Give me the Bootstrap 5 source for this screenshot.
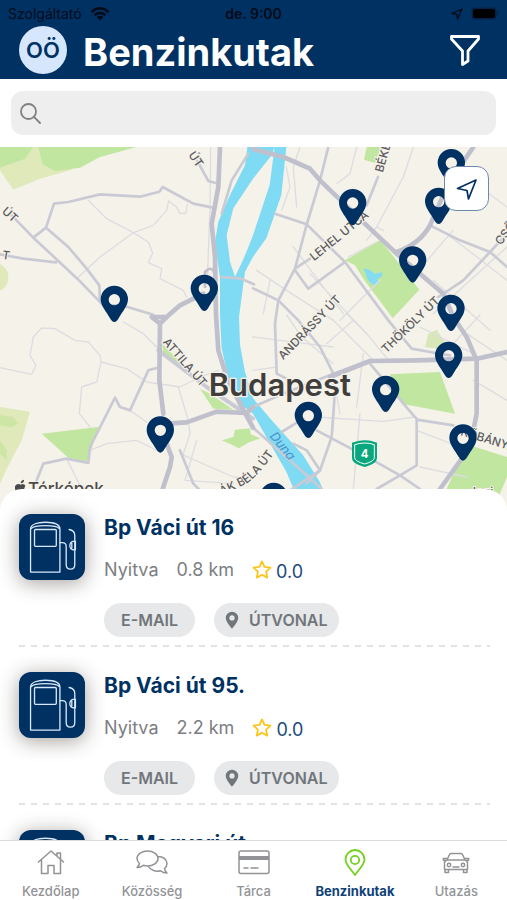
<!DOCTYPE html>
<html lang="hu">
<head>
<meta charset="utf-8">
<meta name="viewport" content="width=device-width, initial-scale=1">
<title>Benzinkutak</title>
<link rel="stylesheet" href="https://cdn.jsdelivr.net/npm/bootstrap@5.3.0/dist/css/bootstrap.min.css">
<style>
:root{--navy:#003163;--muted:#7b7e82}
body{font-family:Inter,"Liberation Sans",sans-serif;color:var(--navy)}
svg{display:block;flex:none}
main{min-height:0}
.top-bar{background:var(--navy)}
.status{height:25px;padding:2px 8px 0;font-size:14px;line-height:24px;color:#020b17}
.status > *{flex:1 1 0}
.title-row{height:54px;padding:0 26px 4px 19px;gap:16px}
.avatar{width:48px;height:48px;background:#d6e6fd;color:var(--navy);font-size:22px;font-weight:600}
.page-title{font-size:38px;line-height:48px;font-weight:700;padding-top:4px}
.search-row{padding:12px 11px}
.search-field{height:44px;border-radius:12px;background:#eee;padding:0 9px;color:#808080}
.search-field input{font-size:18px}
.search-field:focus-within{outline:2px solid #8fb2dc}
.locate{top:19px;right:18px;width:45px;height:45px;border:1px solid #6d89ab;border-radius:12px}
.sheet{margin-top:-28px;border-radius:22px 22px 0 0;overflow:auto;scrollbar-width:none;min-height:0;padding:0 17px 0 19px}
.sheet::-webkit-scrollbar{display:none}
.station{padding:25px 0 10px;gap:19px;background:repeating-linear-gradient(90deg,#e3e3e3 0 6px,transparent 6px 12px) left bottom/100% 2px no-repeat}
.thumb{width:66px;height:66px;border-radius:12px;background:var(--navy);box-shadow:0 3px 20px rgba(40,30,25,.42)}
.station h2{font-size:21px;line-height:28px;font-weight:700;margin:0 0 14px}
.meta{font-size:18px;line-height:28px;height:28px;color:var(--muted);gap:18px;margin-bottom:19px}
.rating{color:#204a7d;gap:4px}
.rating span{padding-top:4px}
.actions{gap:19px}
.pill{height:34px;border:0;border-radius:17px;background:#e6e8ea;color:#71767b;font-size:16px;font-weight:600;padding:0 17px}
.pill-route{padding:0 11px;gap:10px}
.tabs{border-top:1px solid #dcdcdc;height:60px}
.tabs a{flex:1 1 0;color:#929397;font-size:13px;line-height:18px;font-weight:500;padding-top:7px;gap:6px}
.tabs a.current{color:#104177;font-weight:700}
.line{fill:none;stroke:currentColor;stroke-linecap:round;stroke-linejoin:round}
.road{fill:none;stroke:#c9cad4;stroke-linejoin:round;stroke-linecap:round}
.road.lane{stroke:#dddde1}
.road.avenue{stroke:#bfc0cc}
.street{font-size:35px;font-weight:500;fill:#5c5b5d;stroke:#f5f2ea;stroke-width:6px;paint-order:stroke}
</style>
<script src="https://cdn.jsdelivr.net/npm/bootstrap@5.3.0/dist/js/bootstrap.bundle.min.js"></script>
</head>
<body>
<svg width="0" height="0" class="position-absolute" aria-hidden="true">
<defs>
<symbol id="pump" viewBox="0 0 200 200"><g fill="none" stroke="#d9e8fa" stroke-width="4" stroke-linejoin="round" stroke-linecap="round"><path d="M35 176V46C35 31 57 25 80 25S124 31 124 46V176Z"/><path d="M37 44Q44 35 80 35T122 44"/><rect x="47" y="47" width="66" height="51" rx="3"/><path d="M124 87h7q12 0 12 12v54q0 14 13 14t13-14V65q0-15-17-18M169 82q-14 0-15 13t15 14M171 82v26M160 88v15"/></g></symbol>
<symbol id="star" viewBox="0 0 20 20"><path fill="none" stroke="#fcc419" stroke-width="1.800" stroke-linejoin="round" d="M10 1.500l2.500 5.400 6 .7-4.400 4 1.100 6L10 14.800l-5.200 2.800 1.100-6-4.400-4 6-.7z"/></symbol>
<symbol id="spot" viewBox="0 0 14 18"><path fill="currentColor" fill-rule="evenodd" d="M7 17.800C6 16 .8 11 .8 7a6.200 6.200 0 0 1 12.400 0c0 4-5.200 9-6.200 10.800zM7 4.300a2.600 2.600 0 1 0 0 5.200 2.600 2.600 0 0 0 0-5.200z"/></symbol>
<symbol id="pin" viewBox="-42 -110 84 112" overflow="visible"><path fill="#003163" fill-rule="evenodd" d="M0 0C-5 0-9-5-12-10C-25-32-41-49-41-68A41 41 0 0 1 41-68C41-49 25-32 12-10C9-5 5 0 0 0ZM0-84a17 17 0 1 0 0 34 17 17 0 0 0 0-34Z"/></symbol>
</defs>
</svg>

<div class="vh-100 d-flex flex-column overflow-hidden bg-white">
<header class="top-bar flex-shrink-0">
  <div class="status d-flex">
    <div class="d-flex align-items-center gap-2"><span>Szolgáltató</span>
      <svg width="20" height="14" viewBox="0 0 20 14" aria-hidden="true"><g fill="none" stroke="#020b17" stroke-width="2.600"><path d="M1.500 5Q10-2.500 18.500 5M4.500 8.300Q10 3.500 15.500 8.300"/></g><path fill="#020b17" d="M6.700 10.200Q10 7.500 13.300 10.200L10 13.500z"/></svg></div>
    <div class="text-center fw-semibold">de. 9:00</div>
    <div class="d-flex align-items-center justify-content-end gap-2">
      <svg width="12" height="12" viewBox="0 0 12 12" aria-hidden="true"><path class="line" stroke-width="1.300" d="M11 1L1 5.500l4.700.8L6.500 11z"/></svg>
      <svg width="28" height="13" viewBox="0 0 28 13" aria-hidden="true"><rect x=".5" y=".5" width="25" height="12" rx="3" fill="#022347"/><rect x="2" y="2" width="22" height="9" rx="2"/><path fill="#022347" d="M26 4q3 2.500 0 5z"/></svg></div>
  </div>
  <div class="title-row d-flex align-items-center">
    <div class="avatar rounded-circle d-flex align-items-center justify-content-center">OÖ</div>
    <h1 class="page-title text-white m-0 flex-grow-1">Benzinkutak</h1>
    <button class="btn p-0 border-0 text-white" aria-label="Szűrés"><svg width="32" height="32" viewBox="0 0 32 32" aria-hidden="true"><path class="line" stroke-width="2.800" d="M2.500 2.500H29.500V5L19 17V27L13.500 30.500V17L2.500 5Z"/></svg></button>
  </div>
</header>

<div class="search-row flex-shrink-0">
  <div class="search-field d-flex align-items-center gap-2">
    <label for="q"><svg width="21" height="21" viewBox="0 0 21 21" role="img" aria-label="Keresés"><path class="line" stroke-width="1.800" d="M13.700 13.700L20 20M16 8.500a7.500 7.500 0 1 1-15 0a7.500 7.500 0 1 1 15 0z"/></svg></label>
    <input id="q" type="search" class="form-control border-0 bg-transparent shadow-none p-0">
  </div>
</div>

<main class="d-flex flex-column flex-grow-1">
<section class="position-relative flex-shrink-0" aria-label="Térkép">
<svg class="w-100" viewBox="0 0 1521 1110" role="img" aria-label="Budapest térképe">
<rect width="1521" height="1110" fill="#f5f2ea"/>
<!-- parks and hills -->
<g fill="#dfe9b9">
<path d="M0 0H330L210 70 120 95 40 128 0 70Z"/><path d="M0 350q28 18 25 45t-25 35z"/><path d="M0 780L90 794 65 880 20 965 0 1010Z"/>
</g>
<g fill="#c1e6a0">
<path d="M0 0H100L75 35 0 62Z"/><path d="M115 0H410L300 30 240 62 165 72 128 52Z"/><path d="M0 805l40 5 15 20-20 10-35-5zM0 880l20 30 0 30-20-20z" fill="#cde5a5"/>
<path d="M125 860L295 840 262 945 205 932Z"/><path d="M487 590L560 665 490 622ZM600 725L630 740 700 788 640 785Z"/>
<path d="M665 880l35-10 5-22 45-4 2 18 30 12-35 12-30 18-25-12z"/>
<path d="M1100 0H1143L1125 48 1092 38Z"/>
<path d="M1035 340L1140 280 1178 325 1258 428 1178 514 1090 395 1065 355Z"/>
<path d="M1170 682L1320 675 1365 800 1205 770Z"/>
<path d="M1395 890L1521 930V990L1470 1110H1300L1352 1000Z"/><path d="M1275 600L1285 560 1310 548 1350 610Z" fill="#d7e7b8"/>
</g>
<path d="M1090 362l20 8 15 10 22-5-2 14-13 8 5 14-20 2-14-15z" fill="#84dcf3"/>
<!-- river and island -->
<path fill="#7fdaf3" d="M742 0L735 54 690 144 655 224 645 284 660 394 660 504 665 604 685 694 720 770 759 800 859 974 895 1060 910 1110H990L969 1029 959 1004 909 924 819 824 759 754 735 674 720 594 717 510 735 374 759 330 799 274 844 144 859 0Z"/>
<path fill="#f5f2ea" d="M815 25L759 95 700 184 680 264 690 344 705 389Q735 330 759 265L809 114 824 0Z"/>
<!-- lanes -->
<g class="road lane" stroke-width="4">
<path d="M265 160L320 215 400 257 445 285 458 318 445 347 485 365 480 395 550 430 560 450"/>
<path d="M230 395L300 330 400 257 460 235 500 190 506 162 530 180 540 200 558 198 562 172"/>
<path d="M0 662L95 682 108 655 90 625 100 570 125 543 165 545 225 580 265 585 300 625 303 645 290 705 245 720 238 800 270 840"/>
<path d="M303 645L380 665 440 705 540 720 600 690 655 670"/><path d="M370 525L430 560 480 610"/><path d="M390 790L440 825M270 910L320 890 410 880 480 915M200 935L245 1026"/>
<path d="M535 720L565 820 570 860 550 920M540 920L700 990 760 995"/>
<path d="M632 0L630 180 622 400M590 880L555 1000 700 1010"/>
<path d="M859 60L870 120 845 190M900 0L880 60 890 180M1070 0L1050 80 1010 110"/>
<path d="M1240 0L1210 90 1130 240 1150 250M1045 330L1130 285M1521 180L1440 120M1040 500L1100 560 1170 645M1130 240L1100 280"/>
<path d="M1359 250L1230 400M1340 260L1521 400M1300 400L1470 550M1521 300L1300 500M1400 560L1521 640M1440 504L1360 590"/>
<path d="M770 370L860 430 1000 520M880 300L1030 500M790 500L810 400M759 570L1000 600M930 380L1100 560M1020 520L1140 400"/>
<path d="M950 810L1150 823 1245 810M1260 960L1400 990M1070 780L1090 620M1250 850L1380 900M1000 690L1020 800M1420 700L1521 760M1260 540L1420 620"/>
<path d="M860 504L905 570 1000 650M1000 520L1120 640M830 660L759 670M1060 520L980 590M1080 800L1060 1026"/>
</g>
<!-- streets -->
<g class="road" stroke-width="8">
<path d="M35 205L100 272 235 398 310 475 365 475 460 503"/>
<path d="M100 272L138 242 162 170 205 165 300 142 420 149 478 134 488 120 580 170 635 181"/>
<path d="M138 242L205 300 260 365 298 415 300 460"/><path d="M0 322L70 335 168 346"/>
<path d="M592 42L625 102 655 110M745 20L695 100 665 200M665 390L720 394 762 412"/>
<path d="M110 1000L130 950 200 935 265 948 270 900 345 752 360 780 390 790 445 670 470 663"/>
<path d="M985 0L960 100 918 240 885 365 835 460 825 530 830 680 870 700"/>
<path d="M759 424L835 460 895 520 960 600 1000 680 1003 760 995 870 960 970 920 1010"/>
<path d="M825 200L920 232 1035 345 1165 520 1210 575 1235 605 1290 615 1350 625"/>
<path d="M885 370L925 425 1035 345M885 365L930 335"/>
<path d="M1100 175L1134 90M1290 235L1380 280 1470 315 1521 360M1470 315L1390 400 1315 450M1470 315L1521 260"/>
<path d="M1110 650L1240 805 1250 815 1250 955 1200 985 1130 1026M1250 818L1360 835M950 850L1120 940 1200 985 1260 1026M845 855L910 815"/>
<path d="M759 780L850 740 1000 680 1110 640M759 842L920 985 965 1026M880 890L920 910 960 970M870 1030L960 970M540 910L580 1010 600 1030"/>
<path d="M475 610L620 720 759 815" stroke-width="12"/>
</g>
<!-- main roads -->
<g class="road avenue" stroke-width="14">
<path d="M660 0L655 120 635 230 645 330 648 504 655 610 680 690 720 770 759 842"/>
<path d="M610 440L540 475 500 510 480 530 455 510 500 510M480 530L478 700 490 800"/>
<path d="M500 830L560 826 650 794 740 798 759 780M500 890L515 930 510 960 488 1026"/>
<path d="M615 420V375Q640 350 645 390" stroke-width="8"/>
<path d="M759 6L850 30 930 65 960 100 1100 235 1190 320 1330 440 1360 510 1400 570 1430 640 1430 800 1410 900 1320 1026"/>
<path d="M1190 315Q1260 290 1290 235L1345 110 1420 0"/>
<path d="M990 690L1110 642 1250 640 1430 635 1521 615"/>
</g>
<!-- highway shield -->
<path d="M1059 889q37-12 69 0v45q0 14-34 23-35-9-35-23z" fill="#08a77d" stroke="#08a77d" stroke-width="6"/><path d="M1064 893q32-10 59 0v39q0 11-29 19-30-8-30-19z" fill="none" stroke="#fff" stroke-width="3"/>
<text x="1094" y="933" text-anchor="middle" font-size="34" font-weight="700" fill="#fff">4</text>
<!-- labels -->
<g class="street">
<text transform="translate(564 24) rotate(55)">ÚT</text><text transform="translate(4 196) rotate(42)">ÚT</text><text transform="translate(5 335) rotate(8)">T</text>
<text transform="translate(942 343) rotate(-39)">LEHEL UTCA</text>
<text transform="translate(1148 78) rotate(-74)">BÉKE</text><text transform="translate(1502 296) rotate(-52)">CSŐ</text>
<text transform="translate(850 640) rotate(-46)">ANDRÁSSY ÚT</text><text transform="translate(1159 620) rotate(-44)">THÖKÖLY ÚT</text>
<text transform="translate(487 586) rotate(49)">ATTILA ÚT</text><text transform="translate(1380 864) rotate(17)">KŐBÁNYA</text>
<path id="bela" d="M665 1045L740 1010Q790 975 850 875" fill="none" stroke="none"/><text><textPath href="#bela">ÁK BÉLA ÚT</textPath></text>
<text x="1408" y="1046">Jogi</text>
</g>
<text transform="translate(808 868) rotate(51)" font-size="38" font-style="italic" fill="#4b91c9">Duna</text>
<text x="626" y="748" font-size="93" font-weight="600" fill="#403e3d" stroke="#f5f2ea" stroke-width="8" paint-order="stroke">Budapest</text>
<g fill="#4b4a4a"><path d="M45 1025q-2-14 12-14l5 2 5-2q8 0 9 6-8 12 2 20l-12 20H54zM62 1009q0-9 10-11 1 10-10 11z"/><text x="84" y="1044" font-size="51" font-weight="500">Térképek</text></g>
<!-- fuel stations -->
<g transform="translate(-42 0)">
<use href="#pin" x="1316" y="121" width="84" height="112"/>
<use href="#pin" x="1354" y="5" width="84" height="112"/>
<use href="#pin" x="1058" y="125" width="84" height="112"/>
<use href="#pin" x="1238" y="297" width="84" height="112"/>
<use href="#pin" x="1353" y="442" width="84" height="112"/>
<use href="#pin" x="1157" y="685" width="84" height="112"/>
<use href="#pin" x="1346" y="583" width="84" height="112"/>
<use href="#pin" x="925" y="763" width="84" height="112"/>
<use href="#pin" x="1389" y="831" width="84" height="112"/>
<use href="#pin" x="821" y="1006" width="84" height="112"/>
<use href="#pin" x="613" y="382" width="84" height="112"/>
<use href="#pin" x="343" y="415" width="84" height="112"/>
<use href="#pin" x="481" y="807" width="84" height="112"/>
</g>
</svg>
<button class="locate position-absolute bg-white p-0 d-flex align-items-center justify-content-center" aria-label="Saját helyzet"><svg width="22" height="22" viewBox="0 0 22 22" aria-hidden="true"><path fill="none" stroke="#003163" stroke-width="1.700" stroke-linejoin="round" d="M20 2L1.500 10.500L11 12.500L12.500 21Z"/></svg></button>
</section>

<section class="sheet bg-white position-relative flex-grow-1" aria-label="Benzinkutak listája">
  <article class="station d-flex align-items-start">
    <div class="thumb flex-shrink-0"><svg width="66" height="66" aria-hidden="true"><use href="#pump"/></svg></div>
    <div><h2>Bp Váci út 16</h2>
      <div class="meta d-flex"><span>Nyitva</span><span>0.8 km</span><div class="rating d-flex align-items-center"><svg width="20" height="20" aria-hidden="true"><use href="#star"/></svg><span>0.0</span></div></div>
      <div class="actions d-flex"><button class="pill">E-MAIL</button><button class="pill pill-route d-flex align-items-center"><svg width="14" height="18" aria-hidden="true"><use href="#spot"/></svg>ÚTVONAL</button></div>
    </div>
  </article>
  <article class="station d-flex align-items-start">
    <div class="thumb flex-shrink-0"><svg width="66" height="66" aria-hidden="true"><use href="#pump"/></svg></div>
    <div><h2>Bp Váci út 95.</h2>
      <div class="meta d-flex"><span>Nyitva</span><span>2.2 km</span><div class="rating d-flex align-items-center"><svg width="20" height="20" aria-hidden="true"><use href="#star"/></svg><span>0.0</span></div></div>
      <div class="actions d-flex"><button class="pill">E-MAIL</button><button class="pill pill-route d-flex align-items-center"><svg width="14" height="18" aria-hidden="true"><use href="#spot"/></svg>ÚTVONAL</button></div>
    </div>
  </article>
  <article class="station d-flex align-items-start">
    <div class="thumb flex-shrink-0"><svg width="66" height="66" aria-hidden="true"><use href="#pump"/></svg></div>
    <div><h2>Bp Magyari út</h2></div>
  </article>
</section>
</main>

<nav class="tabs d-flex bg-white flex-shrink-0 position-relative" aria-label="Fő menü">
  <a href="#" class="d-flex flex-column align-items-center text-decoration-none"><svg width="28" height="28" viewBox="0 0 28 28" aria-hidden="true"><path class="line" stroke-width="1.500" d="M1.500 14L14 3L26.500 14M4.500 11.500V25.500H11V17.500H17V25.500H23.500V11.500M20 8V5H23.500V11"/></svg>Kezdőlap</a>
  <a href="#" class="d-flex flex-column align-items-center text-decoration-none"><svg width="32" height="28" viewBox="0 0 32 28" aria-hidden="true"><path class="line" stroke-width="1.500" d="M1 19.500Q3.500 17 3.500 15.500Q1 13 1 10.500C1 6 6 3 11.500 3S22 6 22 10.500S17 18 11.500 18Q9 18 7.500 17.300Q4.500 19.500 1 19.500ZM22 8.500C27.500 8.500 31 12 31 15.500Q31 18.500 28.500 20.500Q28.500 22.500 31 25Q27 25 24.500 22.700C20 24 14.500 22.500 12 18"/></svg>Közösség</a>
  <a href="#" class="d-flex flex-column align-items-center text-decoration-none"><svg width="32" height="28" viewBox="0 0 32 28" aria-hidden="true"><rect class="line" stroke-width="1.500" x="1" y="3" width="30" height="22.500" rx="2"/><path fill="currentColor" d="M1 8h30v4H1z"/><path class="line" stroke-width="1.500" d="M6 20h4M13 20h7"/></svg>Tárca</a>
  <a href="#" class="current d-flex flex-column align-items-center text-decoration-none" aria-current="page"><svg width="28" height="28" viewBox="0 0 28 28" aria-hidden="true"><g fill="none" stroke="#72d11f" stroke-width="1.800" stroke-linejoin="round"><path d="M14 27C12 23.500 4.500 17 4.500 11.500a9.500 9.500 0 0 1 19 0C23.500 17 16 23.500 14 27Z"/><circle cx="14" cy="12" r="4.200"/></g></svg>Benzinkutak</a>
  <a href="#" class="d-flex flex-column align-items-center text-decoration-none"><svg width="28" height="28" viewBox="0 0 28 28" aria-hidden="true"><path class="line" stroke-width="1.500" d="M5 12L7.500 6.500Q8 5.500 9.500 5.500H18.500Q20 5.500 20.500 6.500L23 12M5 12Q2.500 12.500 2.500 15V21.500H25.500V15Q25.500 12.500 23 12ZM5 12H23M3 21.500V24.500H6.500V21.500M21.500 21.500V24.500H25V21.500M4.800 10.500H1.200Q1 12.500 3.500 13M23.200 10.500H26.800Q27 12.500 24.500 13M11 19H17"/><g class="line" stroke-width="1.500"><circle cx="7" cy="17" r="1.700"/><circle cx="21" cy="17" r="1.700"/></g></svg>Utazás</a>
</nav>
</div>
</body>
</html>
